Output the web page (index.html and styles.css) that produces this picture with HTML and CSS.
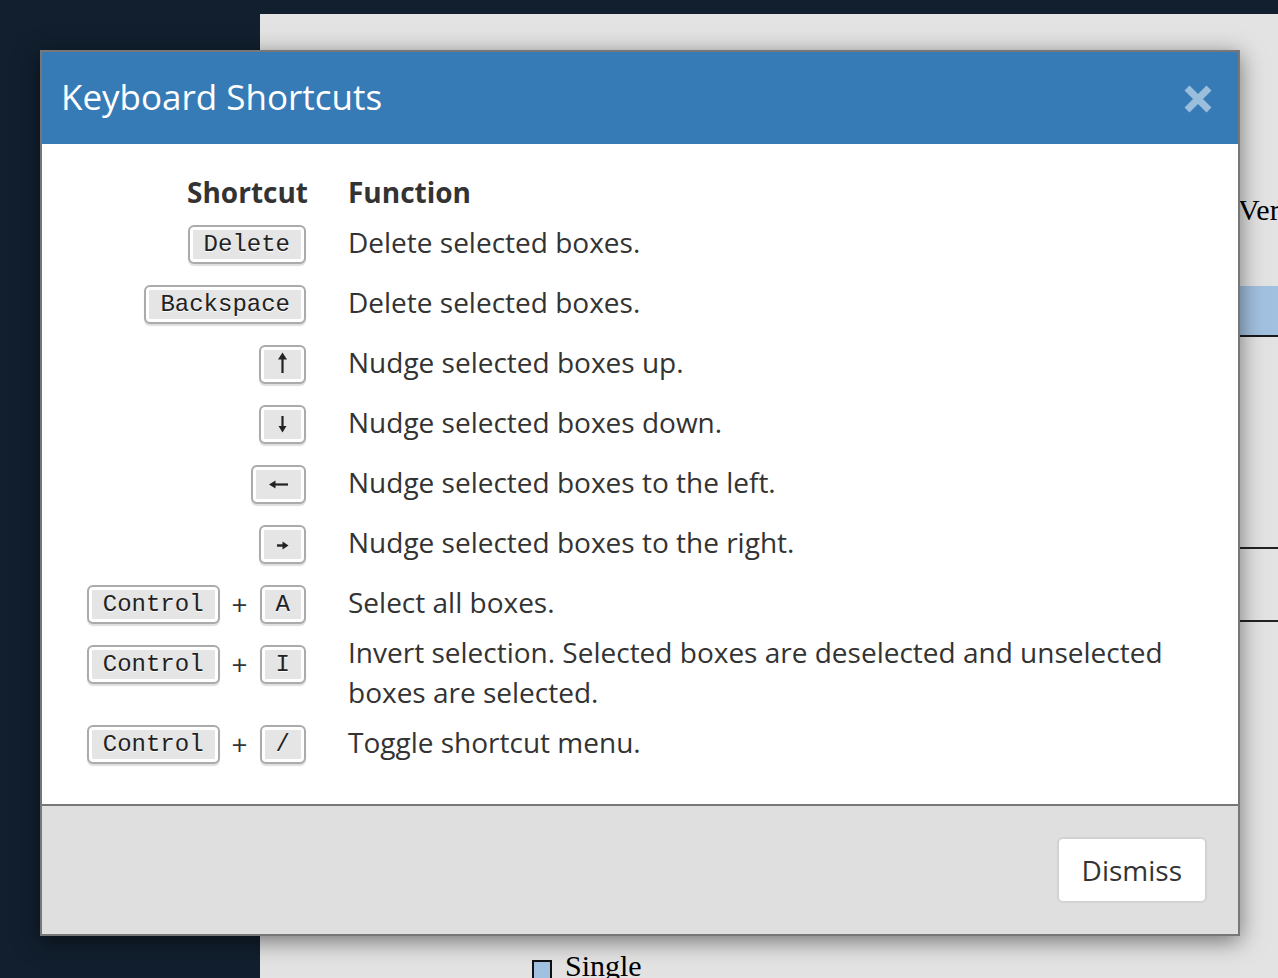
FILE: index.html
```html
<!DOCTYPE html>
<html lang="en">
<head>
<meta charset="utf-8">
<title>Keyboard Shortcuts</title>
<link rel="stylesheet" href="styles.css">
</head>
<body>
<div class="app">
  <aside class="sidebar"></aside>
  <main class="main">
    <div class="strip">
      <div class="ver">Version</div>
      <div class="bar"></div>
      <div class="sep sep-a"></div>
      <div class="sep sep-b"></div>
    </div>
    <label class="single"><span class="cb"></span>Single</label>
  </main>
</div>

<section class="modal" role="dialog" aria-label="Keyboard Shortcuts">
  <header class="modal-head">
    <h2 class="modal-title">Keyboard Shortcuts</h2>
    <button class="close" aria-label="Close">
      <svg width="32" height="32" viewBox="0 0 32 32"><path d="M5 5 L27 27 M27 5 L5 27" stroke="#9cbedd" stroke-width="7" fill="none"/></svg>
    </button>
  </header>
  <div class="modal-body">
    <div class="row head">
      <div class="keys-h">Shortcut</div>
      <div class="fn">Function</div>
    </div>
    <div class="row tight">
      <div class="keys"><kbd class="key">Delete</kbd></div>
      <div class="fn">Delete selected boxes.</div>
    </div>
    <div class="row">
      <div class="keys"><kbd class="key">Backspace</kbd></div>
      <div class="fn">Delete selected boxes.</div>
    </div>
    <div class="row">
      <div class="keys"><kbd class="key icon" aria-label="Up arrow"><svg width="15" height="35" viewBox="0 0 15 35"><path d="M7.5 10 V26" stroke="#222" stroke-width="2.2"/><path d="M3 12.5 L7.5 5.5 L12 12.5 Z" fill="#222"/></svg></kbd></div>
      <div class="fn">Nudge selected boxes up.</div>
    </div>
    <div class="row">
      <div class="keys"><kbd class="key icon" aria-label="Down arrow"><svg width="15" height="35" viewBox="0 0 15 35"><path d="M7.5 9 V21" stroke="#222" stroke-width="2.2"/><path d="M3.5 19 L7.5 25.5 L11.5 19 Z" fill="#222"/></svg></kbd></div>
      <div class="fn">Nudge selected boxes down.</div>
    </div>
    <div class="row">
      <div class="keys"><kbd class="key icon" aria-label="Left arrow"><svg width="23" height="35" viewBox="0 0 23 35"><path d="M6 17.5 H21" stroke="#222" stroke-width="2.2"/><path d="M2 17.5 L8.5 13.5 L8.5 21.5 Z" fill="#222"/></svg></kbd></div>
      <div class="fn">Nudge selected boxes to the left.</div>
    </div>
    <div class="row">
      <div class="keys"><kbd class="key icon" aria-label="Right arrow"><svg width="15" height="35" viewBox="0 0 15 35"><path d="M2 18.5 H9" stroke="#222" stroke-width="2.4"/><path d="M13.5 18.5 L7.5 14.5 L7.5 22.5 Z" fill="#222"/></svg></kbd></div>
      <div class="fn">Nudge selected boxes to the right.</div>
    </div>
    <div class="row">
      <div class="keys"><kbd class="key">Control</kbd><span class="plus">+</span><kbd class="key">A</kbd></div>
      <div class="fn">Select all boxes.</div>
    </div>
    <div class="row tight">
      <div class="keys low"><kbd class="key">Control</kbd><span class="plus">+</span><kbd class="key">I</kbd></div>
      <div class="fn">Invert selection. Selected boxes are deselected and unselected boxes are selected.</div>
    </div>
    <div class="row tight">
      <div class="keys"><kbd class="key">Control</kbd><span class="plus">+</span><kbd class="key">/</kbd></div>
      <div class="fn">Toggle shortcut menu.</div>
    </div>
  </div>
  <footer class="modal-foot">
    <button class="dismiss">Dismiss</button>
  </footer>
</section>
</body>
</html>
```
FILE: styles.css
```css
* { box-sizing: border-box; }
html, body { margin: 0; padding: 0; }
body {
  background: #111f2e;
  width: 1278px;
  height: 978px;
  overflow: hidden;
  font-family: "Open Sans", "Noto Sans", sans-serif;
}
.app {
  display: flex;
  height: 978px;
}
.sidebar {
  width: 260px;
  flex: none;
}
.main {
  flex: 1;
  margin-top: 14px;
  background: #e3e3e3;
  overflow: hidden;
  font-family: "Liberation Serif", serif;
  color: #000;
}
.strip {
  margin-left: 978px;
  padding-top: 179px;
}
.ver {
  font-size: 30px;
  line-height: 34px;
  white-space: nowrap;
}
.bar {
  margin-top: 59px;
  height: 51px;
  background: #a2c1e0;
  border-bottom: 2px solid #1a1a1a;
}
.sep {
  height: 2px;
  background: #222;
}
.sep-a { margin-top: 210px; }
.sep-b { margin-top: 71px; }
.single {
  display: flex;
  align-items: center;
  gap: 13px;
  margin-top: 327px;
  margin-left: 272px;
  font-size: 30px;
  line-height: 34px;
  white-space: nowrap;
}
.cb {
  width: 20px;
  height: 20px;
  border: 2px solid #111;
  background: #a2c1e0;
  margin-top: 8px;
}

/* modal */
.modal {
  position: absolute;
  left: 40px;
  top: 50px;
  width: 1200px;
  border: 2px solid #777;
  background: #fff;
  box-shadow: 0 5px 22px rgba(0, 0, 0, 0.5);
  color: #333;
}
.modal-head {
  height: 92px;
  background: #377bb6;
  display: flex;
  align-items: center;
  justify-content: space-between;
  padding: 0 24px 0 19px;
}
.modal-title {
  margin: 0 0 2px;
  font-size: 35px;
  font-weight: 400;
  color: #fff;
  line-height: 48px;
}
.close {
  border: 0;
  background: none;
  padding: 0;
  width: 32px;
  height: 32px;
  margin-top: 2px;
  display: flex;
}
.modal-body {
  padding: 28px 30px 42px 0;
}
.row {
  display: grid;
  grid-template-columns: 264px 1fr;
  column-gap: 42px;
  align-items: start;
  margin-top: 20px;
}
.row.head { margin-top: 0; font-weight: 700; }
.row.tight { margin-top: 10px; }
.keys-h {
  text-align: right;
  font-size: 28px;
  line-height: 40px;
  margin-right: -2px;
}
.fn {
  font-size: 28px;
  line-height: 40px;
}
.keys {
  height: 40px;
  padding-top: 3px;
  display: flex;
  justify-content: flex-end;
  align-items: flex-start;
  gap: 12px;
}
.keys.low { padding-top: 13px; }
.key {
  display: inline-block;
  height: 39px;
  padding: 0 14px;
  border: 2px solid #ababab;
  border-radius: 6px;
  background: #e5e5e5;
  box-shadow: inset 0 0 0 3px #fff, 0 2px 1px rgba(0, 0, 0, 0.13);
  font-family: "Liberation Mono", "Courier New", monospace;
  font-size: 24px;
  line-height: 35px;
  color: #222;
  text-shadow: 0 1px 0 #fff;
}
.key.icon {
  display: inline-flex;
  align-items: flex-start;
}
.key.icon svg { display: block; }
.plus {
  font-size: 28px;
  line-height: 38px;
  color: #333;
}
.modal-foot {
  border-top: 2px solid #777;
  background: #dfdfdf;
  padding: 31px;
  display: flex;
  justify-content: flex-end;
}
.dismiss {
  font-family: "Open Sans", "Noto Sans", sans-serif;
  font-size: 28px;
  line-height: 40px;
  color: #333;
  background: #fff;
  border: 2px solid #d2d2d2;
  border-radius: 6px;
  padding: 11px 23px;
}
```
